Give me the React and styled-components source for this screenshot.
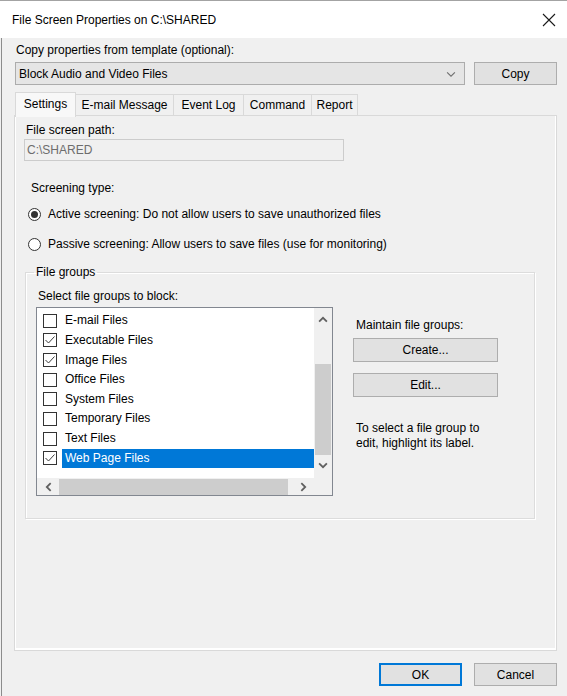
import styled, { createGlobalStyle } from "styled-components";

const GlobalStyle = createGlobalStyle`
  html, body {
    margin: 0;
    padding: 0;
    background: #f0f0f0;
  }
  body {
    font-family: "Liberation Sans", Arial, sans-serif;
    font-size: 12px;
    color: #000;
  }
`;

const Window = styled.div`
  width: 567px;
  height: 696px;
  display: flex;
  flex-direction: column;
  background: #f0f0f0;
  box-sizing: border-box;
  overflow: hidden;
`;
const TitleBar = styled.div`
  height: 37px;
  flex: none;
  background: #fff;
  border-top: 1px solid #a3a3a3;
  display: flex;
  align-items: center;
  justify-content: space-between;
  padding: 0 10px 0 12px;
  font-size: 12px;
`;
const CloseButton = styled.div`
  width: 14px;
  height: 14px;
  display: flex;
  margin-right: 1px;
`;
const Body = styled.div`
  flex: 1;
  display: flex;
  flex-direction: column;
  padding: 5px 10px 0 12px;
  border-left: 1px solid #8c8c8c;
  margin-left: 1px;
`;
const Label = styled.div`
  line-height: 15px;
  padding-left: ${p => p.$indent || 0}px;
  margin-top: ${p => p.$top || 0}px;
`;
const TemplateRow = styled.div`
  display: flex;
  gap: 9px;
  margin-top: 4px;
  margin-left: 1px;
`;
const Select = styled.div`
  flex: 1;
  height: 23px;
  box-sizing: border-box;
  background: #e5e5e5;
  border: 1px solid #acacac;
  display: flex;
  align-items: center;
  justify-content: space-between;
  padding: 0 8px 0 3px;
`;
const Button = styled.div`
  width: ${p => p.$w || 83}px;
  height: ${p => p.$h || 23}px;
  box-sizing: border-box;
  background: #e1e1e1;
  border: ${p => (p.$default ? "2px solid #0078d7" : "1px solid #adadad")};
  display: flex;
  align-items: center;
  justify-content: center;
  flex: none;
`;
const Tabs = styled.div`
  display: flex;
  align-items: flex-end;
  height: 24px;
  margin-top: 7px;
  margin-left: 1px;
  position: relative;
  z-index: 1;
`;
const Tab = styled.div`
  width: ${p => p.$w}px;
  height: ${p => (p.$active ? 25 : 22)}px;
  box-sizing: border-box;
  border: 1px solid #d9d9d9;
  border-left: ${p => (p.$first ? "1px solid #d9d9d9" : "none")};
  border-bottom: ${p => (p.$active ? "none" : "1px solid #d9d9d9")};
  background: ${p => (p.$active ? "#f8f8f8" : "#f0f0f0")};
  display: flex;
  align-items: center;
  justify-content: center;
  padding-bottom: ${p => (p.$active ? 3 : 0)}px;
  margin-bottom: ${p => (p.$active ? -1 : 0)}px;
`;
const Panel = styled.div`
  flex: 1;
  margin-top: -1px;
  border: 1px solid #d9d9d9;
  box-shadow: inset 1px 0 #fff, inset 0 -2px #fff, inset -1px 0 #fff;
  padding: 7px 13px 0 9px;
  display: flex;
  flex-direction: column;
`;
const PathInput = styled.div`
  width: 320px;
  height: 22px;
  box-sizing: border-box;
  margin-top: 1px;
  border: 1px solid #cccccc;
  color: #6d6d6d;
  display: flex;
  align-items: center;
  padding-left: 2px;
`;
const RadioRow = styled.div`
  display: flex;
  align-items: center;
  gap: 7px;
  height: 16px;
  margin-top: ${p => p.$top}px;
  padding-left: 4px;
`;
const Radio = styled.div`
  width: 13px;
  height: 13px;
  box-sizing: border-box;
  border-radius: 50%;
  border: 1px solid #333;
  background: #fff;
  display: flex;
  align-items: center;
  justify-content: center;

  &::after {
    content: "";
    display: ${p => (p.$on ? "block" : "none")};
    width: 7px;
    height: 7px;
    border-radius: 50%;
    background: #333;
  }
`;
const GroupBox = styled.fieldset`
  margin: 13px 0 0 1px;
  width: 510px;
  box-sizing: border-box;
  border: 1px solid #dcdcdc;
  box-shadow: inset 1px 1px #fff, 1px 1px #fff;
  padding: 0 0 22px 10px;
  display: flex;
  gap: 20px;
`;
const Legend = styled.legend`
  padding: 0 2px;
  margin-left: -2px;
  line-height: 15px;
`;
const ListColumn = styled.div`
  display: flex;
  flex-direction: column;
`;
const ListBox = styled.div`
  width: 297px;
  height: 189px;
  box-sizing: border-box;
  border: 1px solid #828790;
  margin-top: 3px;
  display: grid;
  grid-template-columns: 1fr 18px;
  grid-template-rows: 1fr 17px;
  background: #fff;
`;
const Items = styled.div`
  padding: 3px 0 0 6px;
  overflow: hidden;
`;
const Item = styled.div`
  display: flex;
  align-items: center;
  height: 19.64px;
  gap: 5px;
`;
const Check = styled.div`
  width: 14px;
  height: 14px;
  box-sizing: border-box;
  border: 1px solid #333;
  background: #fff;
  flex: none;
  display: flex;
  align-items: center;
  justify-content: center;
`;
const ItemText = styled.div`
  flex: 1;
  height: 19px;
  line-height: 19px;
  padding-left: 3px;
  background: ${p => (p.$selected ? "#0078d7" : "transparent")};
  color: ${p => (p.$selected ? "#fff" : "#000")};
`;
const VScroll = styled.div`
  background: #f0f0f0;
  display: flex;
  flex-direction: column;
  align-items: center;
  padding-top: 7px;
`;
const VThumb = styled.div`
  width: 16px;
  height: 91px;
  background: #cdcdcd;
  margin: 39px 0 5px;
`;
const HScroll = styled.div`
  background: #f0f0f0;
  display: flex;
  align-items: center;
  padding-left: 7px;
`;
const HThumb = styled.div`
  width: 229px;
  height: 16px;
  background: #cdcdcd;
  margin: 0 10px 0 5px;
`;
const Corner = styled.div`
  background: #f0f0f0;
`;
const SideColumn = styled.div`
  display: flex;
  flex-direction: column;
  padding-top: 38px;
`;
const SideButtons = styled.div`
  display: flex;
  flex-direction: column;
  gap: 11px;
  margin-top: 5px;
`;
const Hint = styled.div`
  line-height: 15px;
  margin: 24px 0 0 3px;
`;
const Footer = styled.div`
  display: flex;
  justify-content: flex-end;
  gap: 12px;
  padding: 12px 0 10px;
`;

const Chevron = ({ dir = "down", size = 9, color = "#606060", width = 1 }) => {
  const pts = {
    down: "1,3 4.5,6.5 8,3",
    up: "1,6 4.5,2.5 8,6",
    left: "6,1 2.5,4.5 6,8",
    right: "3,1 6.5,4.5 3,8",
  }[dir];
  return (
    <svg width={size} height={size} viewBox="0 0 9 9">
      <polyline points={pts} fill="none" stroke={color} strokeWidth={width} />
    </svg>
  );
};

const Tick = () => (
  <svg width="12" height="12" viewBox="0 0 12 12">
    <polyline points="1.5,6 4.5,9 10.5,2.5" fill="none" stroke="#3c3c3c" strokeWidth="1" />
  </svg>
);

const groups = [
  { name: "E-mail Files", on: false },
  { name: "Executable Files", on: true },
  { name: "Image Files", on: true },
  { name: "Office Files", on: false },
  { name: "System Files", on: false },
  { name: "Temporary Files", on: false },
  { name: "Text Files", on: false },
  { name: "Web Page Files", on: true, selected: true },
];

const tabs = [
  { name: "Settings", w: 61 },
  { name: "E-mail Message", w: 98 },
  { name: "Event Log", w: 70 },
  { name: "Command", w: 68 },
  { name: "Report", w: 46 },
];

export default function App() {
  return (
    <>
      <GlobalStyle />
      <Window>
        <TitleBar>
          <span>File Screen Properties on C:\SHARED</span>
          <CloseButton>
            <svg width="14" height="14" viewBox="0 0 14 14">
              <path d="M1 1 L13 13 M13 1 L1 13" stroke="#1a1a1a" strokeWidth="1.1" />
            </svg>
          </CloseButton>
        </TitleBar>
        <Body>
          <Label $indent={2}>Copy properties from template (optional):</Label>
          <TemplateRow>
            <Select>
              <span>Block Audio and Video Files</span>
              <Chevron dir="down" size={10} color="#707070" />
            </Select>
            <Button>Copy</Button>
          </TemplateRow>
          <Tabs>
            {tabs.map((t, i) => (
              <Tab key={t.name} $w={t.w} $active={i === 0} $first={i === 0}>
                {t.name}
              </Tab>
            ))}
          </Tabs>
          <Panel>
            <Label $indent={2}>File screen path:</Label>
            <PathInput>C:\SHARED</PathInput>
            <Label $indent={7} $top={20}>Screening type:</Label>
            <RadioRow $top={10}>
              <Radio $on />
              <span>Active screening: Do not allow users to save unauthorized files</span>
            </RadioRow>
            <RadioRow $top={14}>
              <Radio />
              <span>Passive screening: Allow users to save files (use for monitoring)</span>
            </RadioRow>
            <GroupBox>
              <Legend>File groups</Legend>
              <ListColumn>
                <Label $indent={2} $top={9}>Select file groups to block:</Label>
                <ListBox>
                  <Items>
                    {groups.map(g => (
                      <Item key={g.name}>
                        <Check>{g.on && <Tick />}</Check>
                        <ItemText $selected={g.selected}>{g.name}</ItemText>
                      </Item>
                    ))}
                  </Items>
                  <VScroll>
                    <Chevron dir="up" size={10} width={1.6} />
                    <VThumb />
                    <Chevron dir="down" size={10} width={1.6} />
                  </VScroll>
                  <HScroll>
                    <Chevron dir="left" size={10} width={1.6} />
                    <HThumb />
                    <Chevron dir="right" size={10} width={1.6} />
                  </HScroll>
                  <Corner />
                </ListBox>
              </ListColumn>
              <SideColumn>
                <Label $indent={3}>Maintain file groups:</Label>
                <SideButtons>
                  <Button $w={145} $h={24}>Create...</Button>
                  <Button $w={145} $h={24}>Edit...</Button>
                </SideButtons>
                <Hint>
                  To select a file group to
                  <br />
                  edit, highlight its label.
                </Hint>
              </SideColumn>
            </GroupBox>
          </Panel>
          <Footer>
            <Button $default>OK</Button>
            <Button>Cancel</Button>
          </Footer>
        </Body>
      </Window>
    </>
  );
}
